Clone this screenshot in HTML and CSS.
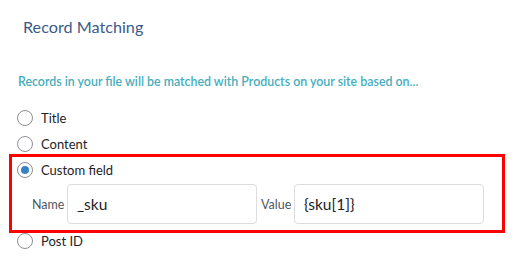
FILE: index.html
```html
<!DOCTYPE html>
<html lang="en">
  <head>
    <meta charset="UTF-8" />
    <title>Record Matching</title>
    <link rel="stylesheet" href="styles.css">
  </head>
  <body>
    <div class="page">
      <h2 class="page-title">Record Matching</h2>
      <p class="intro">Records in your file will be matched with Products on your site based on...</p>
      <div class="options">
        <label class="option"><input type="radio" name="match" /> Title</label>
        <label class="option"><input type="radio" name="match" /> Content</label>
        <label class="option"><input type="radio" name="match" checked /> Custom field</label>
        <div class="field-row">
          <span class="field-label">Name</span>
          <input class="field-input" type="text" value="_sku" />
          <span class="field-label">Value</span>
          <input class="field-input" type="text" value="{sku[1]}" />
        </div>
        <label class="option"><input type="radio" name="match" /> Post ID</label>
      </div>
      <div class="highlight"></div>
    </div>
  </body>
</html>
```

FILE: styles.css
```css
body {
  margin: 0;
  padding: 0;
  background: #ffffff;
  font-family: Lato, "Open Sans", sans-serif;
  color: #1d2327;
}

.page {
  position: relative;
  padding: 16px 18px 0 17px;
}

.page-title {
  margin: 0 0 0 6px;
  font-size: 16.2px;
  line-height: 22px;
  font-weight: 400;
  color: #3c5a8a;
}

.intro {
  margin: 35px 0 0 1px;
  font-size: 12.4px;
  line-height: 18px;
  font-weight: 600;
  color: #46aebc;
}

.options {
  margin-top: 14px;
  display: flex;
  flex-direction: column;
}

.option {
  display: flex;
  align-items: center;
  gap: 8px;
  height: 26px;
  font-size: 13px;
}

.option input {
  appearance: none;
  margin: 0;
  width: 16px;
  height: 16px;
  border: 1px solid #8c8f94;
  border-radius: 50%;
  background: #fff;
  display: flex;
  align-items: center;
  justify-content: center;
}

.option input:checked::before {
  content: "";
  width: 8px;
  height: 8px;
  border-radius: 50%;
  background: #3582c4;
}

.field-row {
  display: flex;
  align-items: center;
  margin: 1px 0 4px 15px;
}

.field-label {
  width: 35px;
  font-size: 12.5px;
  color: #50575e;
}

.field-label + .field-input + .field-label {
  width: 33px;
}

.field-input {
  width: 190px;
  height: 40px;
  box-sizing: border-box;
  border: 1px solid #dcdcde;
  border-radius: 4px;
  padding: 0 9px;
  font-family: inherit;
  font-size: 15.5px;
  color: #1d2327;
  margin-right: 4px;
}

.highlight {
  position: absolute;
  left: 9px;
  top: 154px;
  width: 490px;
  height: 73px;
  border: 3px solid #ff0000;
  pointer-events: none;
}
```
